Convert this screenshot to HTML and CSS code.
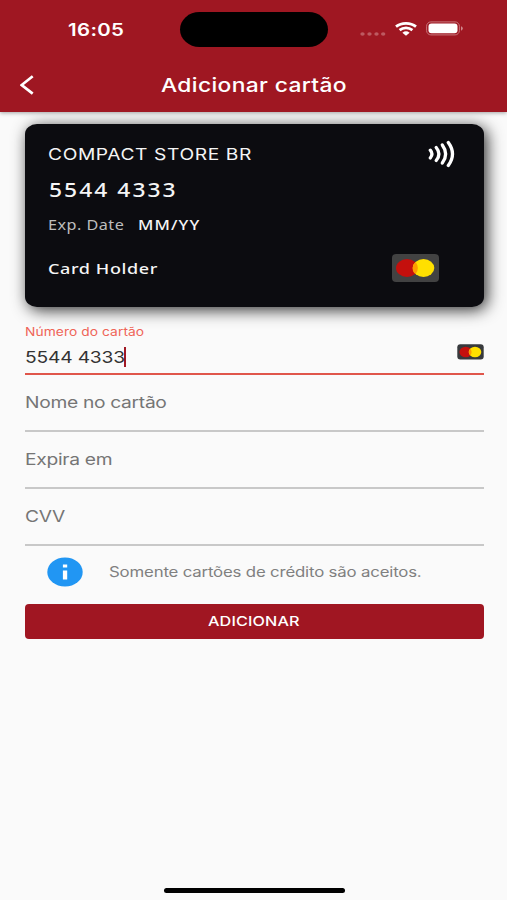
FILE: index.html
```
<!DOCTYPE html>
<html lang="pt-BR">
<head>
<meta charset="utf-8">
<meta name="viewport" content="width=device-width, initial-scale=1">
<title>Adicionar cartão</title>
<link rel="stylesheet" href="styles.css">
</head>
<body>
<div class="screen">
  <header class="header">
    <div class="status">
      <div class="side"><span class="t time">16:05</span></div>
      <div class="island"></div>
      <div class="side indicators">
        <svg class="dots" width="28" height="6" viewBox="0 0 28 6"><g fill="#bd5a61"><ellipse cx="3.5" cy="3" rx="2.2" ry="1.8"/><ellipse cx="10.5" cy="3" rx="2.2" ry="1.8"/><ellipse cx="17.5" cy="3" rx="2.2" ry="1.8"/><ellipse cx="24.2" cy="3" rx="2.2" ry="1.8"/></g></svg>
        <svg class="wifi" width="22" height="14" viewBox="0 0 22 14"><g fill="none" stroke="#fff" stroke-width="2.8"><path d="M1 4.700C6.500 .3 15.500 .3 21 4.700"/><path d="M4.600 8.100C8.300 5.100 13.700 5.100 17.400 8.100"/></g><path d="M7.400 10.700Q11 8 14.600 10.700L11 13.800Z" fill="#fff"/></svg>
        <svg class="battery" width="37" height="15" viewBox="0 0 37 15"><rect x=".6" y=".9" width="32.800" height="13" rx="4.300" fill="none" stroke="#c9757b"/><rect x="2.500" y="2.600" width="29" height="9.700" rx="3" fill="#fff"/><path d="M35 5.300q1.800.6 1.800 2.200t-1.800 2.200z" fill="#d0868b"/></svg>
      </div>
    </div>
    <div class="nav">
      <svg class="back" width="14" height="20" viewBox="0 0 14 20"><path d="M12.700 1.200 1.700 10 12.700 18.600" fill="none" stroke="#fff" stroke-width="2.700"/></svg>
      <h1 class="t title">Adicionar cartão</h1>
    </div>
  </header>
  <main class="content">
    <section class="card">
      <div class="row bank-row">
        <span class="t bank">COMPACT STORE BR</span>
        <svg class="nfc" width="27" height="28" viewBox="0 0 27 28"><g fill="none" stroke="#fff" stroke-width="3.300" stroke-linecap="round"><path d="M2.300 10.200Q5.600 14 2.300 18"/><path d="M8.200 7.500Q13.600 14 8.200 20.500"/><path d="M14.300 4.900Q21 14 14.300 23.100"/><path d="M20.300 2.500Q28.700 14 20.300 25.500"/></g></svg>
      </div>
      <div class="row number-row"><span class="t number">5544 4333</span></div>
      <div class="row exp-row"><span class="t exp">Exp. Date</span><span class="t date">MM/YY</span></div>
      <div class="row holder-row">
        <span class="t holder">Card Holder</span>
        <svg class="brand" width="47" height="28" viewBox="0 0 47 28"><rect width="47" height="28" rx="4" fill="#424242"/><ellipse cx="15" cy="14" rx="11" ry="9" fill="#c4100d"/><ellipse cx="31.500" cy="14" rx="10.800" ry="9" fill="#ffe000"/><path d="M23.600 7.900Q21 10 20.700 14T23.600 20.100Q28.200 14 23.600 7.900Z" fill="#ff9c00"/></svg>
      </div>
    </section>
    <form class="form">
      <div class="field active">
        <label class="t label">Número do cartão</label>
        <div class="value-row">
          <span class="t value">5544 4333</span><i class="caret"></i>
          <svg class="mini" width="27" height="16" viewBox="0 0 27 16"><rect x=".3" y=".3" width="26.400" height="15.200" rx="3" fill="#37393c"/><ellipse cx="8.700" cy="8" rx="6.300" ry="5.200" fill="#c4100d"/><ellipse cx="18" cy="8" rx="6.300" ry="5.200" fill="#ffe000"/><path d="M13.400 4.700Q12 6.200 11.900 8T13.400 11.300Q15.800 8 13.400 4.700Z" fill="#ff9c00"/></svg>
        </div>
      </div>
      <div class="field"><span class="t hint name">Nome no cartão</span></div>
      <div class="field"><span class="t hint expires">Expira em</span></div>
      <div class="field"><span class="t hint cvv">CVV</span></div>
      <div class="info">
        <svg width="36" height="30" viewBox="0 0 36 30"><ellipse cx="18" cy="15" rx="17.700" ry="14.600" fill="#2196f3"/><path d="M15.900 7.600h4.300v3h-4.300zM15.900 13.500h4.300v9h-4.300z" fill="#fff"/></svg>
        <span class="t note">Somente cartões de crédito são aceitos.</span>
      </div>
      <button class="submit" type="button"><span class="t add">ADICIONAR</span></button>
    </form>
  </main>
  <div class="home"></div>
</div>
</body>
</html>
```
FILE: styles.css
```
* { box-sizing: border-box; }
body { margin: 0; background: #fafafa; font-family: Inter, "Liberation Sans", sans-serif; }
svg { display: block; flex: none; }
.screen { width: 507px; height: 900px; display: flex; flex-direction: column; overflow: hidden; }
/* Wide type: every label is stretched from its left edge. */
.t { display: block; white-space: nowrap; transform: scaleX(1.2); transform-origin: left center; }

.header { height: 111.500px; background: #9f1722; color: #fff; box-shadow: 0 1px 4px rgba(0,0,0,.35); position: relative; z-index: 1; flex: none; }
.status { height: 59px; display: flex; }
.side { width: 180px; height: 59px; padding-left: 68px; flex: none; }
.time { font-size: 17px; font-weight: 600; line-height: 60px; letter-spacing: .3px; }
.island { flex: none; width: 148px; height: 35.500px; margin-top: 11.700px; border-radius: 20px / 18px; background: #000; }
.side.indicators { display: flex; width: 179px; padding-left: 31px; }
.dots { margin-top: 30.500px; }
.wifi { margin: 21.500px 0 0 8px; }
.battery { margin: 21px 0 0 9px; }
.nav { display: flex; height: 52px; padding-left: 20px; align-items: center; }
.title { margin: 0 0 0 127px; font-size: 19px; font-weight: 500; letter-spacing: .3px; }

.content { padding: 12px 23.500px 0 24.500px; flex: 1; }
.card { height: 183px; border-radius: 12px / 10px; background: #0c0c10; color: #f5f5f5; padding: 14px 24px 0; box-shadow: 3px 3px 16px rgba(0,0,0,.82); font-family: "Noto Sans", "Open Sans", sans-serif; }
.row { display: flex; align-items: center; }
.bank-row { height: 32px; justify-content: space-between; }
.bank { font: 400 16px Inter, sans-serif; letter-spacing: .5px; margin-left: -.5px; }
.nfc { margin-right: 5px; }
.number-row { height: 40px; }
.number { font-size: 19px; font-weight: 500; letter-spacing: 1.700px; }
.exp-row { height: 30px; }
.exp { width: 89.500px; margin-left: -.5px; font-size: 13.500px; color: #bdbdbd; letter-spacing: .4px; }
.date { font-size: 14px; font-weight: 500; letter-spacing: .9px; }
.holder-row { height: 56px; justify-content: space-between; }
.holder { margin-left: -.5px; font-size: 15px; font-weight: 500; letter-spacing: .5px; }
.brand { margin-right: 20.500px; }

.field { height: 57px; border-bottom: 2px solid #c8c8c8; padding-top: 17px; }
.field.active { height: 68px; border-bottom-color: #e0564b; padding-top: 16px; }
.label { font-size: 11.500px; line-height: 18px; color: #ef6558; letter-spacing: .05px; }
.value-row { height: 32px; display: flex; align-items: center; }
.value { width: 99.500px; font-size: 16px; color: #333; letter-spacing: -.15px; }
.caret { width: 2px; height: 20px; background: #a01824; }
.mini { margin: -10px 0 0 auto; }
.hint { font-size: 16px; line-height: 20px; color: #757575; letter-spacing: -.25px; }
.info { display: flex; align-items: center; height: 52px; padding-left: 22px; }
.note { margin-left: 26.500px; font-size: 14px; color: #808080; letter-spacing: -.15px; }
.submit { display: flex; justify-content: flex-start; align-items: center; width: 100%; height: 35px; margin-top: 6px; padding: 0 0 0 183.500px; border: 0; border-radius: 4px; background: #a01622; color: #fff; font-family: inherit; }
.add { font-size: 13.500px; font-weight: 500; letter-spacing: .1px; }
.home { width: 181px; height: 5px; margin: 0 0 7.500px 163.500px; border-radius: 3px; background: #000; }
```
